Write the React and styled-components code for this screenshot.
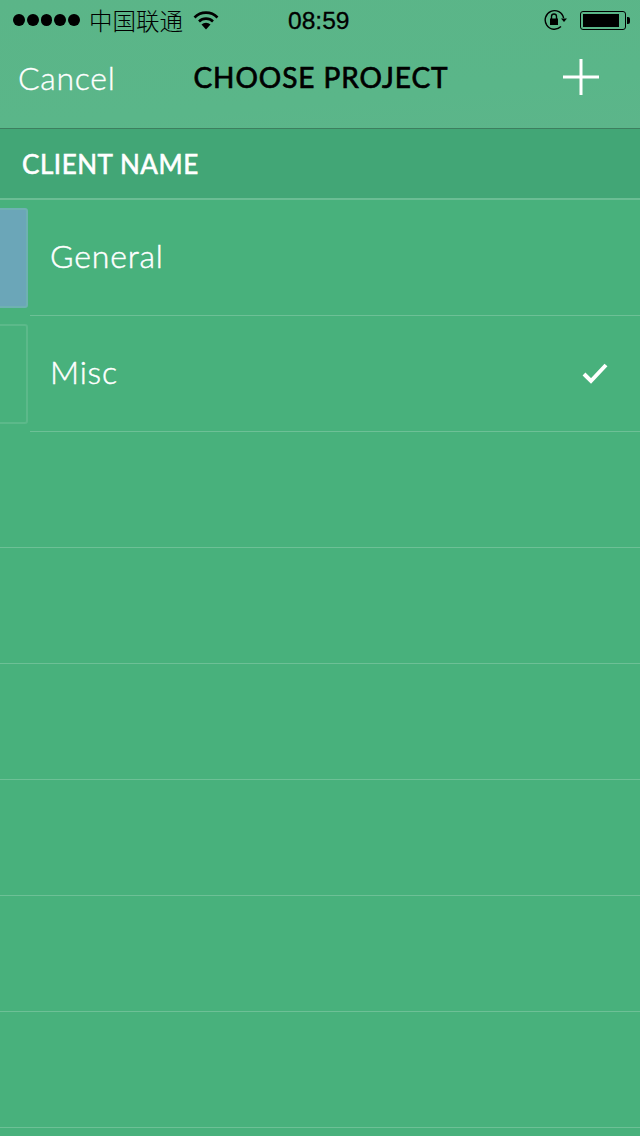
import React from 'react';
import styled, { createGlobalStyle } from 'styled-components';

const GlobalStyle = createGlobalStyle`
    html, body {
        margin: 0;
        padding: 0;
        background: #48b17c;
    }
`;

const Screen = styled.div`
    width: 640px;
    height: 1136px;
    overflow: hidden;
    display: flex;
    flex-direction: column;
    background: #48b17c;
    font-family: Lato, "Noto Sans", sans-serif;
`;

const Top = styled.div`
    height: 128px;
    display: flex;
    flex-direction: column;
    background: linear-gradient(175deg, #5bb588 0%, #5ab689 70%, #5cb58a 100%);
    border-bottom: 1px solid #3d7f5f;
`;

const StatusBar = styled.div`
    height: 40px;
    position: relative;
    display: flex;
    align-items: center;
    justify-content: space-between;
    padding: 0 13px;
    color: #000;
`;

const StatusGroup = styled.div`
    display: flex;
    align-items: center;
`;

const Dots = styled.div`
    display: flex;
    gap: 2px;
    margin-right: 9px;
`;

const Dot = styled.span`
    width: 11.8px;
    height: 11.8px;
    border-radius: 50%;
    background: #000;
`;

const Carrier = styled.span`
    font-family: "Noto Sans CJK SC", sans-serif;
    font-size: 23.5px;
    font-weight: 300;
    width: 95px;
    white-space: nowrap;
    margin-right: 9px;
    line-height: 36px;
    margin-top: -1px;
`;

const Clock = styled.span`
    position: absolute;
    left: 288px;
    top: 6px;
    font-family: "Liberation Sans", sans-serif;
    font-size: 24.6px;
    line-height: 30px;
    -webkit-text-stroke: 0.3px #000;
`;

const Battery = styled.div`
    width: 46px;
    height: 19px;
    margin-left: 12px;
    margin-right: 1px;
    padding: 2px;
    box-sizing: border-box;
    border: 1px solid #000;
    border-radius: 3px;
    position: relative;
    &::before {
        content: '';
        display: block;
        width: 36px;
        height: 100%;
        background: #000;
    }
    &::after {
        content: '';
        position: absolute;
        right: -5px;
        top: 5px;
        width: 3px;
        height: 7px;
        background: #000;
        border-radius: 0 2px 2px 0;
    }
`;

const NavBar = styled.div`
    flex: 1;
    position: relative;
    display: flex;
    align-items: center;
    justify-content: space-between;
    padding: 0 41px 0 18px;
    margin-top: -14px;
`;

const Cancel = styled.span`
    font-size: 32px;
    font-weight: 300;
    color: #fff;
    letter-spacing: 0.7px;
    -webkit-text-stroke: 0.35px #fff;
`;

const Title = styled.span`
    position: absolute;
    left: 2px;
    right: 0;
    text-align: center;
    font-size: 28px;
    font-weight: 400;
    color: #000;
    letter-spacing: 0.95px;
    -webkit-text-stroke: 0.7px #000;
`;

const SectionHead = styled.div`
    height: 69px;
    display: flex;
    align-items: center;
    padding-left: 22px;
    background: #42a676;
    border-bottom: 2px solid #6bbd94;
    font-size: 26px;
    font-weight: 400;
    color: #fff;
    letter-spacing: 0.55px;
    -webkit-text-stroke: 0.6px #fff;
`;

const Row = styled.div`
    height: 116px;
    flex: none;
    display: flex;
    align-items: center;
`;

const Swatch = styled.div`
    width: 34px;
    height: 100px;
    margin-left: -6px;
    margin-right: 2px;
    box-sizing: border-box;
    flex: none;
    border: 2px solid ${p => (p.$filled ? '#6fb1b2' : '#5cb98a')};
    border-radius: 3px;
    background: ${p => (p.$filled ? '#6ba6b8' : 'transparent')};
`;

const RowBody = styled.div`
    flex: 1;
    height: 100%;
    box-sizing: border-box;
    display: flex;
    align-items: center;
    justify-content: space-between;
    padding: 0 32px 4px 20px;
    border-bottom: 1px solid #6dc096;
    font-size: 32px;
    font-weight: 300;
    color: #fff;
    letter-spacing: 0.85px;
    -webkit-text-stroke: 0.45px #fff;
`;

const CheckMark = styled.svg`
    margin-top: 2px;
`;

const projects = [
    { name: 'General', filled: true },
    { name: 'Misc', checked: true },
];

function Wifi() {
    return (
        <svg width="26" height="20" viewBox="0 0 26 20">
            <path d="M1.5 7.5a16 16 0 0 1 23 0" fill="none" stroke="#000" strokeWidth="2.6" />
            <path d="M6 11.5a10 10 0 0 1 14 0" fill="none" stroke="#000" strokeWidth="2.6" />
            <path d="M8.5 14.5a6.5 6.5 0 0 1 9 0L13 19.5z" fill="#000" />
        </svg>
    );
}

function RotationLock() {
    return (
        <svg width="24" height="22" viewBox="0 0 24 22">
            <path d="M19.6 9A9.3 9.3 0 1 0 17 17.6" fill="none" stroke="#000" strokeWidth="1.4" />
            <path d="M17 9.5h6l-3 3.5z" fill="#000" />
            <rect x="6" y="9.5" width="8" height="6.5" fill="#000" />
            <path d="M7.5 10V7.5a2.5 2.5 0 0 1 5 0V10" fill="none" stroke="#000" strokeWidth="1.4" />
        </svg>
    );
}

function Plus() {
    return (
        <svg width="36" height="36" viewBox="0 0 36 36">
            <path d="M0 18h36M18 0v36" stroke="#fff" strokeWidth="3" />
        </svg>
    );
}

function Check() {
    return (
        <CheckMark width="26" height="22" viewBox="0 0 26 22">
            <path d="M2 12l7 7L24 3" fill="none" stroke="#fff" strokeWidth="4" />
        </CheckMark>
    );
}

export default function App() {
    return (
        <Screen>
            <GlobalStyle />
            <Top>
                <StatusBar>
                    <StatusGroup>
                        <Dots>
                            {[0, 1, 2, 3, 4].map(i => <Dot key={i} />)}
                        </Dots>
                        <Carrier>中国联通</Carrier>
                        <Wifi />
                    </StatusGroup>
                    <Clock>08:59</Clock>
                    <StatusGroup>
                        <RotationLock />
                        <Battery />
                    </StatusGroup>
                </StatusBar>
                <NavBar>
                    <Cancel>Cancel</Cancel>
                    <Title>CHOOSE PROJECT</Title>
                    <Plus />
                </NavBar>
            </Top>
            <SectionHead>CLIENT NAME</SectionHead>
            {projects.map(p => (
                <Row key={p.name}>
                    <Swatch $filled={p.filled} />
                    <RowBody>
                        {p.name}
                        {p.checked && <Check />}
                    </RowBody>
                </Row>
            ))}
            {[0, 1, 2, 3, 4, 5].map(i => (
                <Row key={i}>
                    <RowBody />
                </Row>
            ))}
        </Screen>
    );
}
